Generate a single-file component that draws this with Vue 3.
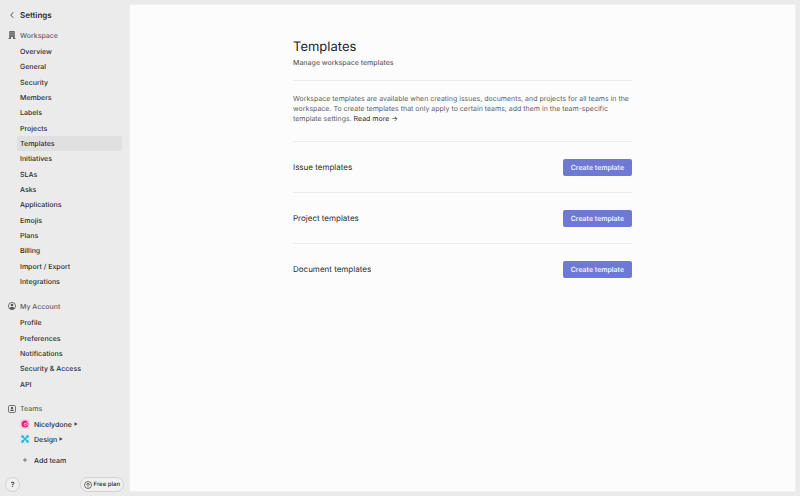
<template>
    <div class="settings">
        <aside class="sidebar">
            <a href="#" class="sidebar__back">
                <svg width="8" height="8" viewBox="0 0 8 8" fill="none">
                    <path d="M5 1.500 2.700 4 5 6.500" stroke="#555" stroke-linecap="round" />
                </svg>
                <span>Settings</span>
            </a>

            <nav class="sidebar__nav">
                <section class="group">
                    <h2 class="group__title">
                        <svg width="8" height="8" viewBox="0 0 16 16" fill="#666">
                            <path fill-rule="evenodd" d="M4 0h8q1.500 0 1.500 1.500V14H15v2h-5v-4H6v4H1v-2h1.500V1.500Q2.500 0 4 0zM5 3v1.500h2V3zM9 3v1.500h2V3zM5 7v1.500h2V7zM9 7v1.500h2V7z" />
                        </svg>
                        Workspace
                    </h2>
                    <ul class="group__list">
                        <li v-for="item in workspaceLinks" :key="item">
                            <a href="#" :class="['link', { 'link--active': item === active }]">{{ item }}</a>
                        </li>
                    </ul>
                </section>

                <section class="group">
                    <h2 class="group__title">
                        <svg width="8" height="8" viewBox="0 0 16 16">
                            <circle cx="8" cy="8" r="7.200" fill="none" stroke="#555" stroke-width="1.600" />
                            <circle cx="8" cy="6" r="2.700" fill="#555" />
                            <path d="M3 12.500Q4 9.500 8 9.500t5 3Q11 15 8 15t-5-2.500z" fill="#555" />
                        </svg>
                        My Account
                    </h2>
                    <ul class="group__list">
                        <li v-for="item in accountLinks" :key="item">
                            <a href="#" class="link">{{ item }}</a>
                        </li>
                    </ul>
                </section>

                <section class="group">
                    <h2 class="group__title">
                        <svg width="8" height="8" viewBox="0 0 16 16">
                            <rect x="1" y="1" width="14" height="14" rx="2.500" fill="none" stroke="#555" stroke-width="1.600" />
                            <circle cx="8" cy="6" r="2.400" fill="#555" />
                            <path d="M4 12Q4 9 8 9t4 3z" fill="#555" />
                        </svg>
                        Teams
                    </h2>
                    <ul>
                        <li>
                            <a href="#" class="team">
                                <svg width="10" height="10" viewBox="0 0 20 20">
                                    <rect width="20" height="20" rx="4" fill="#f6d5e2" />
                                    <circle cx="10" cy="10" r="7" fill="#f5197c" />
                                    <path d="M19 7.500h-5.500L12 9q-2-1.500-3.500.5T10 13q2 .5 3-1.500h3" fill="none" stroke="#f9cfe0" stroke-width="1.800" />
                                </svg>
                                <span>Nicelydone</span>
                                <svg class="team__caret" width="4" height="4" viewBox="0 0 4 4"><path d="M.5.3 3.700 2 .5 3.700z" fill="#444" /></svg>
                            </a>
                        </li>
                        <li>
                            <a href="#" class="team">
                                <svg width="10" height="10" viewBox="0 0 20 20">
                                    <rect width="20" height="20" rx="4" fill="#d3e8ef" />
                                    <path d="M5 5l10 10M15 5 5 15" stroke="#20b5dc" stroke-width="2.600" />
                                    <g fill="#20b5dc">
                                        <circle cx="5" cy="5" r="2.400" />
                                        <circle cx="15" cy="5" r="2.400" />
                                        <circle cx="5" cy="15" r="2.400" />
                                        <circle cx="15" cy="15" r="2.400" />
                                    </g>
                                </svg>
                                <span>Design</span>
                                <svg class="team__caret" width="4" height="4" viewBox="0 0 4 4"><path d="M.5.3 3.700 2 .5 3.700z" fill="#444" /></svg>
                            </a>
                        </li>
                    </ul>
                    <button type="button" class="team team--add">
                        <svg width="10" height="10" viewBox="0 0 20 20">
                            <path d="M10 6v8M6 10h8" stroke="#555" stroke-width="1.500" />
                        </svg>
                        <span>Add team</span>
                    </button>
                </section>
            </nav>

            <footer class="sidebar__footer">
                <button type="button" class="help" aria-label="Help">?</button>
                <button type="button" class="plan">
                    <svg width="8" height="8" viewBox="0 0 16 16" fill="none" stroke="#444" stroke-width="1.500">
                        <circle cx="8" cy="8" r="7" />
                        <path d="M8 12.500V4.500M4.500 7.500 8 4.200l3.500 3.300" />
                    </svg>
                    Free plan
                </button>
            </footer>
        </aside>

        <main class="panel">
            <div class="content">
                <header class="content__header">
                    <h1>Templates</h1>
                    <p>Manage workspace templates</p>
                </header>
                <p class="content__intro">
                    Workspace templates are available when creating issues, documents, and projects for all teams in the
                    workspace. To create templates that only apply to certain teams, add them in the team-specific
                    template settings. <a href="#">Read more →</a>
                </p>
                <section v-for="row in templateRows" :key="row" class="row">
                    <h3>{{ row }}</h3>
                    <button type="button" class="create">Create template</button>
                </section>
            </div>
        </main>
    </div>
</template>

<script setup>
import { ref } from 'vue';

const active = ref('Templates');

const workspaceLinks = [
    'Overview', 'General', 'Security', 'Members', 'Labels', 'Projects', 'Templates', 'Initiatives',
    'SLAs', 'Asks', 'Applications', 'Emojis', 'Plans', 'Billing', 'Import / Export', 'Integrations',
];

const accountLinks = ['Profile', 'Preferences', 'Notifications', 'Security & Access', 'API'];

const templateRows = ['Issue templates', 'Project templates', 'Document templates'];
</script>

<style>
body {
    margin: 0;
    background-color: #ebebeb;
}
</style>

<style scoped>
.settings {
    display: grid;
    grid-template-columns: 129px 1fr;
    min-height: 100vh;
    font-family: Inter, "Liberation Sans", sans-serif;
    font-size: 7px;
    font-weight: 500;
    text-rendering: geometricPrecision;
    color: #2c2c2e;
    background-color: #ebebeb;
}

h1, h2, h3, p, ul {
    margin: 0;
    padding: 0;
    font-weight: 500;
}

ul {
    list-style: none;
}

a {
    color: inherit;
    text-decoration: none;
}

button {
    font: inherit;
    color: inherit;
    border: 0;
    padding: 0;
    background: none;
    box-sizing: border-box;
    text-rendering: inherit;
    cursor: pointer;
}

svg {
    display: block;
    flex: none;
}

.sidebar {
    display: flex;
    flex-direction: column;
    padding: 8px 8px 4px;
    box-sizing: border-box;
}

.sidebar__back {
    display: flex;
    align-items: center;
    gap: 4px;
    height: 14px;
    font-size: 8px;
    font-weight: 600;
}

.sidebar__nav {
    display: flex;
    flex-direction: column;
    gap: 9px;
    padding-top: 5px;
}

.group__title {
    display: flex;
    align-items: center;
    gap: 4px;
    height: 16px;
    font-size: 7px;
    color: #626264;
}

.group__list {
    margin-left: 9px;
    padding-top: 1px;
    line-height: 2.19;
}

.link {
    display: block;
    padding-left: 3px;
    margin-right: -1px;
    border-radius: 2px;
}

.link--active {
    background-color: #e0e0e0;
}

.team {
    display: flex;
    align-items: center;
    gap: 4px;
    height: 15px;
    padding-left: 12px;
}

.team__caret {
    margin-left: -2px;
}

.team--add {
    margin-top: 6px;
}

.sidebar__footer {
    display: flex;
    align-items: center;
    justify-content: space-between;
    margin: auto -3px 0;
}

.help,
.plan {
    display: flex;
    align-items: center;
    justify-content: center;
    gap: 2px;
    height: 15px;
    border: 1px solid #d2d2d2;
    border-radius: 8px;
    background-color: #f0f0f0;
}

.help {
    width: 15px;
}

.plan {
    padding: 0 3px;
    font-size: 6px;
}

.panel {
    margin: 4px 4px 4px 0;
    border: 1px solid #f0f0f0;
    border-radius: 2px;
    background-color: #fcfcfc;
    box-sizing: border-box;
}

.content {
    max-width: 339px;
    margin: 0 auto;
    padding-top: 33px;
}

.content__header {
    padding-bottom: 11px;
    border-bottom: 1px solid #ececec;
}

.content__header h1 {
    font-size: 13px;
    font-weight: 400;
    line-height: 18px;
    color: #1c1c1e;
}

.content__header p {
    padding-top: 1px;
    line-height: 12px;
    color: #626264;
}

.content__intro {
    padding: 13px 0 17px;
    font-weight: 400;
    line-height: 10px;
    color: #626264;
}

.content__intro a {
    color: #2c2c2e;
}

.row {
    display: flex;
    align-items: center;
    justify-content: space-between;
    height: 50px;
    border-top: 1px solid #ececec;
}

.row h3 {
    font-size: 8px;
    font-weight: 400;
}

.create {
    height: 17px;
    padding: 0 8px;
    border-radius: 2px;
    color: #fff;
    background-color: #6e79d6;
}
</style>
